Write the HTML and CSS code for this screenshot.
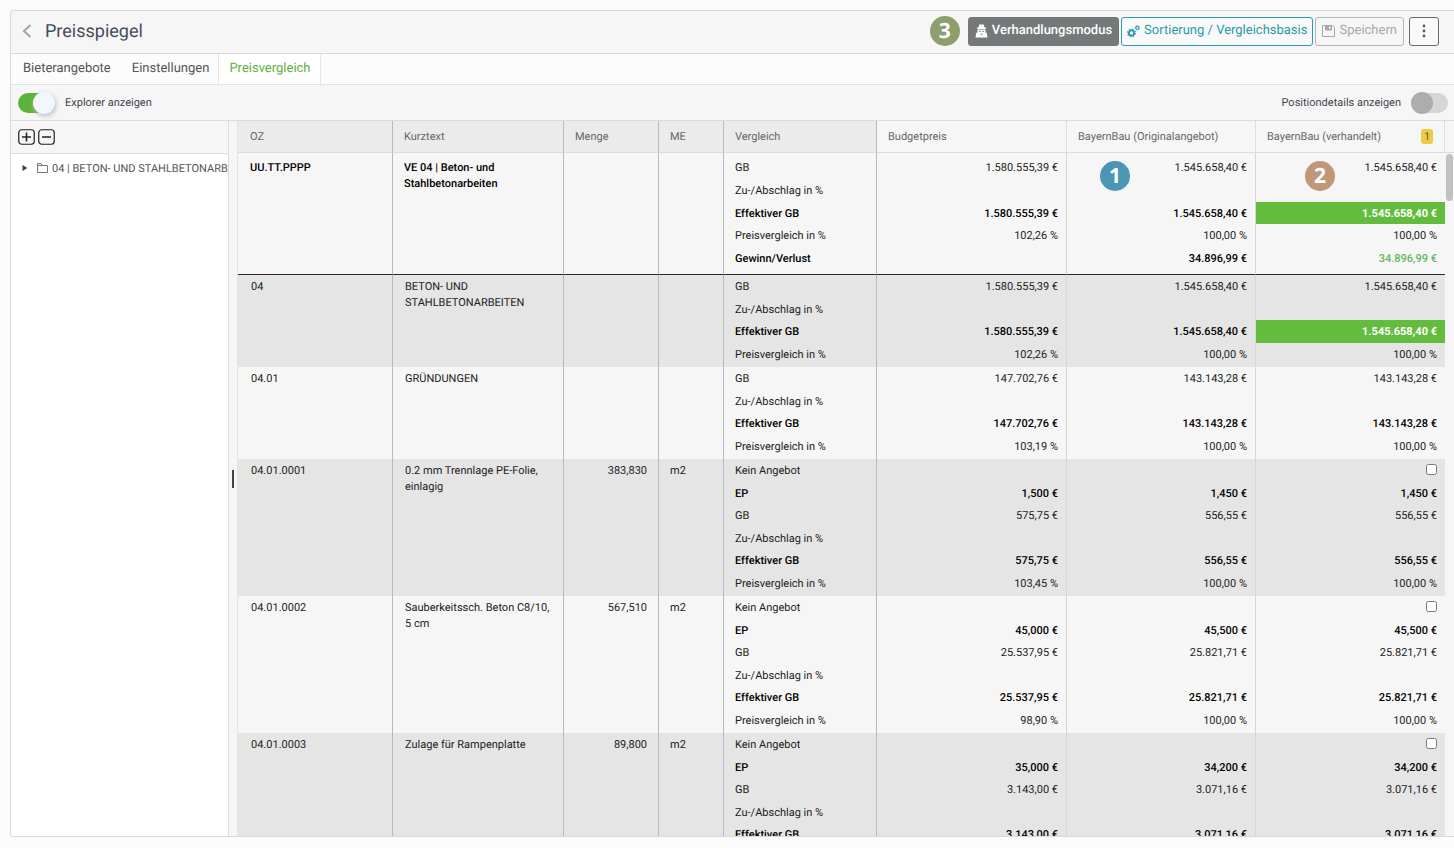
FILE: index.html
```html
<!DOCTYPE html>
<html lang="de">
<head>
<meta charset="utf-8">
<title>Preisspiegel</title>
<link rel="stylesheet" href="styles.css">
</head>
<body>
<main class="panel">
  <header class="titlebar">
    <button class="back" type="button" aria-label="Zurück"><svg width="10" height="16" viewBox="0 0 10 16"><path d="M8.500 2 2 8l6.500 6" fill="none" stroke="#a3a3a3" stroke-width="2"/></svg></button>
    <h1 class="title">Preisspiegel</h1>
    <div class="actions">
      <span class="marker marker-olive">3</span>
      <button class="btn btn-dark" type="button"><svg width="13" height="14" viewBox="0 0 13 14"><path fill="#fff" d="M3.500 3.500 4.200.8 5.300.2 6.500.7 7.700.2 8.800.8 9.500 3.500h1.500V5H2V3.500zM2.500 5.500h8v2.700l1.300.8.700 4.500H.5L1.200 9l1.300-.8z"/><path d="M4 7.300h1.800M7.200 7.300H9M5.500 10.300h2" stroke="#75797a" stroke-width=".9"/></svg>Verhandlungsmodus</button>
      <button class="btn btn-teal" type="button"><svg width="13" height="14" viewBox="0 0 13 14"><circle cx="4.500" cy="9" r="2.600" fill="none" stroke="#2a9ba8" stroke-width="1.800"/><circle cx="4.500" cy="9" r="3.900" fill="none" stroke="#2a9ba8" stroke-width="1.200" stroke-dasharray="1.500 1.560"/><circle cx="10.300" cy="3.800" r="1.500" fill="none" stroke="#2a9ba8" stroke-width="1.100"/><circle cx="10.300" cy="3.800" r="2.300" fill="none" stroke="#2a9ba8" stroke-width=".8" stroke-dasharray="1 .8"/></svg>Sortierung / Vergleichsbasis</button>
      <button class="btn btn-muted" type="button"><svg width="13" height="12" viewBox="0 0 13 12"><path d="M.5.5h10l2 2v9H.5z" fill="none" stroke="#a8a8a8"/><path d="M3 .5h7v5H3z" fill="#a8a8a8"/><path d="M7 1.500h1.500v2.500H7z" fill="#f6f6f6"/></svg>Speichern</button>
      <button class="btn btn-more" type="button" aria-label="Mehr"><svg width="4" height="14" viewBox="0 0 4 14"><g fill="#555a5e"><circle cx="2" cy="2" r="1.400"/><circle cx="2" cy="7" r="1.400"/><circle cx="2" cy="12" r="1.400"/></g></svg></button>
    </div>
  </header>
  <nav class="tabs">
    <a class="tab" href="#bieter">Bieterangebote</a>
    <a class="tab" href="#einstellungen">Einstellungen</a>
    <a class="tab tab-active" href="#preis">Preisvergleich</a>
  </nav>
  <div class="toolbar">
    <label class="toggle"><input class="switch switch-on" type="checkbox" checked>Explorer anzeigen</label>
    <label class="toggle">Positiondetails anzeigen<input class="switch switch-off" type="checkbox"></label>
  </div>
  <div class="content">
    <aside class="explorer">
      <div class="explorer-tools">
        <button class="square" type="button" aria-label="Alle öffnen"><svg width="17" height="16" viewBox="0 0 17 16"><rect x=".75" y=".75" width="15.500" height="14.500" rx="3" fill="none" stroke="#222" stroke-width="1.200"/><path d="M4 8h9M8.500 3.500v9" stroke="#222" stroke-width="1.600"/></svg></button>
        <button class="square" type="button" aria-label="Alle schließen"><svg width="17" height="16" viewBox="0 0 17 16"><rect x=".75" y=".75" width="15.500" height="14.500" rx="3" fill="none" stroke="#222" stroke-width="1.200"/><path d="M4 8h9" stroke="#222" stroke-width="1.600"/></svg></button>
      </div>
      <div class="node">
        <svg class="node-arrow" width="6" height="8" viewBox="0 0 6 8"><path d="M.5 1 5.500 4 .5 7z" fill="#444"/></svg>
        <svg class="node-folder" width="11" height="10" viewBox="0 0 11 10"><path d="M.5 9.500v-9h3.500l1 2h5.500v7zM.5 2.500H5" fill="none" stroke="#777"/></svg>
        <span class="node-label">04 | BETON- UND STAHLBETONARBEITEN</span>
      </div>
    </aside>
    <div class="splitter"><span class="grip"></span></div>
    <div class="grid-area">
      <table class="grid">
        <colgroup><col class="c-oz"><col class="c-text"><col class="c-menge"><col class="c-me"><col class="c-vergleich"><col class="c-budget"><col><col></colgroup>
        <thead>
          <tr><th>OZ</th><th>Kurztext</th><th>Menge</th><th>ME</th><th>Vergleich</th><th class="price">Budgetpreis</th><th class="price">BayernBau (Originalangebot)</th><th class="price"><span class="head-flex">BayernBau (verhandelt)<span class="rank">1</span></span></th></tr>
        </thead>
        <tbody class="total">
          <tr><td rowspan="5" class="text strong">UU.TT.PPPP</td><td rowspan="5" class="text strong">VE 04 | Beton- und Stahlbetonarbeiten</td><td rowspan="5"></td><td rowspan="5"></td><td>GB</td><td class="num">1.580.555,39 €</td><td class="num marked">1.545.658,40 €<span class="marker marker-blue">1</span></td><td class="num marked">1.545.658,40 €<span class="marker marker-tan">2</span></td></tr>
          <tr><td>Zu-/Abschlag in %</td><td class="num"></td><td class="num"></td><td class="num"></td></tr>
          <tr class="strong"><td>Effektiver GB</td><td class="num">1.580.555,39 €</td><td class="num">1.545.658,40 €</td><td class="num best">1.545.658,40 €</td></tr>
          <tr><td>Preisvergleich in %</td><td class="num">102,26 %</td><td class="num">100,00 %</td><td class="num">100,00 %</td></tr>
          <tr class="strong"><td>Gewinn/Verlust</td><td class="num"></td><td class="num">34.896,99 €</td><td class="num gain">34.896,99 €</td></tr>
        </tbody>
        <tbody class="shade">
          <tr><td rowspan="4" class="text">04</td><td rowspan="4" class="text">BETON- UND STAHLBETONARBEITEN</td><td rowspan="4"></td><td rowspan="4"></td><td>GB</td><td class="num">1.580.555,39 €</td><td class="num">1.545.658,40 €</td><td class="num">1.545.658,40 €</td></tr>
          <tr><td>Zu-/Abschlag in %</td><td class="num"></td><td class="num"></td><td class="num"></td></tr>
          <tr class="strong"><td>Effektiver GB</td><td class="num">1.580.555,39 €</td><td class="num">1.545.658,40 €</td><td class="num best">1.545.658,40 €</td></tr>
          <tr><td>Preisvergleich in %</td><td class="num">102,26 %</td><td class="num">100,00 %</td><td class="num">100,00 %</td></tr>
        </tbody>
        <tbody>
          <tr><td rowspan="4" class="text">04.01</td><td rowspan="4" class="text">GRÜNDUNGEN</td><td rowspan="4"></td><td rowspan="4"></td><td>GB</td><td class="num">147.702,76 €</td><td class="num">143.143,28 €</td><td class="num">143.143,28 €</td></tr>
          <tr><td>Zu-/Abschlag in %</td><td class="num"></td><td class="num"></td><td class="num"></td></tr>
          <tr class="strong"><td>Effektiver GB</td><td class="num">147.702,76 €</td><td class="num">143.143,28 €</td><td class="num">143.143,28 €</td></tr>
          <tr><td>Preisvergleich in %</td><td class="num">103,19 %</td><td class="num">100,00 %</td><td class="num">100,00 %</td></tr>
        </tbody>
        <tbody class="shade">
          <tr><td rowspan="6" class="text">04.01.0001</td><td rowspan="6" class="text">0.2 mm Trennlage PE-Folie, einlagig</td><td rowspan="6" class="qty">383,830</td><td rowspan="6">m2</td><td>Kein Angebot</td><td class="num"></td><td class="num"></td><td class="num"><input class="check" type="checkbox" aria-label="Kein Angebot 04.01.0001"></td></tr>
          <tr class="strong"><td>EP</td><td class="num">1,500 €</td><td class="num">1,450 €</td><td class="num">1,450 €</td></tr>
          <tr><td>GB</td><td class="num">575,75 €</td><td class="num">556,55 €</td><td class="num">556,55 €</td></tr>
          <tr><td>Zu-/Abschlag in %</td><td class="num"></td><td class="num"></td><td class="num"></td></tr>
          <tr class="strong"><td>Effektiver GB</td><td class="num">575,75 €</td><td class="num">556,55 €</td><td class="num">556,55 €</td></tr>
          <tr><td>Preisvergleich in %</td><td class="num">103,45 %</td><td class="num">100,00 %</td><td class="num">100,00 %</td></tr>
        </tbody>
        <tbody>
          <tr><td rowspan="6" class="text">04.01.0002</td><td rowspan="6" class="text">Sauberkeitssch. Beton C8/10, 5 cm</td><td rowspan="6" class="qty">567,510</td><td rowspan="6">m2</td><td>Kein Angebot</td><td class="num"></td><td class="num"></td><td class="num"><input class="check" type="checkbox" aria-label="Kein Angebot 04.01.0002"></td></tr>
          <tr class="strong"><td>EP</td><td class="num">45,000 €</td><td class="num">45,500 €</td><td class="num">45,500 €</td></tr>
          <tr><td>GB</td><td class="num">25.537,95 €</td><td class="num">25.821,71 €</td><td class="num">25.821,71 €</td></tr>
          <tr><td>Zu-/Abschlag in %</td><td class="num"></td><td class="num"></td><td class="num"></td></tr>
          <tr class="strong"><td>Effektiver GB</td><td class="num">25.537,95 €</td><td class="num">25.821,71 €</td><td class="num">25.821,71 €</td></tr>
          <tr><td>Preisvergleich in %</td><td class="num">98,90 %</td><td class="num">100,00 %</td><td class="num">100,00 %</td></tr>
        </tbody>
        <tbody class="shade">
          <tr><td rowspan="6" class="text">04.01.0003</td><td rowspan="6" class="text">Zulage für Rampenplatte</td><td rowspan="6" class="qty">89,800</td><td rowspan="6">m2</td><td>Kein Angebot</td><td class="num"></td><td class="num"></td><td class="num"><input class="check" type="checkbox" aria-label="Kein Angebot 04.01.0003"></td></tr>
          <tr class="strong"><td>EP</td><td class="num">35,000 €</td><td class="num">34,200 €</td><td class="num">34,200 €</td></tr>
          <tr><td>GB</td><td class="num">3.143,00 €</td><td class="num">3.071,16 €</td><td class="num">3.071,16 €</td></tr>
          <tr><td>Zu-/Abschlag in %</td><td class="num"></td><td class="num"></td><td class="num"></td></tr>
          <tr class="strong"><td>Effektiver GB</td><td class="num">3.143,00 €</td><td class="num">3.071,16 €</td><td class="num">3.071,16 €</td></tr>
          <tr><td></td><td class="num"></td><td class="num"></td><td class="num"></td></tr>
        </tbody>
      </table>
    </div>
    <div class="scroll-track"><div class="scroll-head"></div><div class="scroll-thumb"></div></div>
  </div>
</main>
</body>
</html>
```

FILE: styles.css
```css
* { box-sizing: border-box; }
body {
  margin: 0;
  height: 100vh;
  padding: 10px 0 11px 10px;
  overflow: hidden;
  background: #fcfcfc;
  color: #1c1c1c;
  font-family: Roboto, "Liberation Sans", sans-serif;
  font-size: 11px;
  text-rendering: geometricPrecision;
}
button { font-family: inherit; text-rendering: inherit; cursor: pointer; }
.panel {
  height: 100%;
  display: flex;
  flex-direction: column;
  border: 1px solid #d9dadb;
  border-right: 0;
  border-radius: 3px 0 0 3px;
  background: #f6f6f6;
  overflow: hidden;
}
.titlebar {
  display: flex;
  align-items: center;
  height: 43px;
  flex: none;
  padding: 0 15px 2px 11px;
  border-bottom: 1px solid #d9dadb;
}
.back { display: flex; padding: 0; border: 0; background: none; }
.title { margin: 0 0 0 13px; font-size: 18px; font-weight: 400; line-height: 24px; padding-top: 2px; color: #454d59; }
.actions { display: flex; align-items: center; gap: 2px; margin-left: auto; }
.marker {
  display: flex;
  align-items: center;
  justify-content: center;
  width: 30px;
  height: 30px;
  border-radius: 50%;
  color: #fff;
  font: 700 21px/30px "Open Sans", sans-serif;
}
.marker-olive { margin-right: 6px; background: #8e9e6c; }
.marker-blue { background: #4a96b4; }
.marker-tan { background: #bf9779; }
.btn {
  display: flex;
  align-items: center;
  justify-content: center;
  gap: 4px;
  height: 29px;
  padding: 0 6px;
  border: 1px solid;
  border-radius: 3px;
  background: #f9f9f9;
  font-size: 13px;
  line-height: 16px;
}
.btn-dark { border-color: #75797a; background: #75797a; color: #fff; font-weight: 500; }
.btn-teal { padding: 0 5px; border-color: #2a9ba8; color: #2a9ba8; }
.btn-muted { border-color: #b5b5b5; color: #a8a8a8; background: #f6f6f6; }
.btn-more { width: 30px; margin-left: 3px; padding: 0; border-color: #666a6e; }
.tabs { display: flex; flex: none; height: 31px; background: #fcfcfc; border-bottom: 1px solid #e2e2e2; }
.tab {
  padding: 0 9px 0 12px;
  font-size: 13px;
  line-height: 30px;
  height: 30px;
  color: #555;
  text-decoration: none;
}
.tab-active { padding: 0 9px 0 10px; border: solid #e6e6e6; border-width: 0 1px; background: #fff; color: #5cb23f; }
.toolbar {
  display: flex;
  align-items: center;
  justify-content: space-between;
  flex: none;
  height: 36px;
  padding: 0 6px 0 7px;
  border-bottom: 1px solid #dcdcdc;
  color: #3f4650;
}
.toggle { display: flex; align-items: center; gap: 10px; }
.switch { appearance: none; position: relative; width: 37px; height: 20px; margin: 0; border-radius: 10px; background: #d6d6d6; }
.switch::before { content: ""; position: absolute; top: -1px; width: 22px; height: 22px; border-radius: 50%; }
.switch-on { background: #5bb43a; }
.switch-on::before { right: 0; background: #f2f7fd; box-shadow: 1px 2px 5px #bbbbbb; }
.switch-off::before { left: 0; background: #adadad; }
.content { display: flex; flex: 1; min-height: 0; }
.explorer { width: 218px; flex: none; overflow: hidden; background: #fff; border-right: 1px solid #dcdcdc; }
.explorer-tools { display: flex; align-items: center; gap: 3px; height: 33px; padding-left: 7px; background: #f6f6f6; border-bottom: 1px solid #dcdcdc; }
.square { display: flex; padding: 0; border: 0; background: none; }
.node { display: flex; align-items: center; height: 28px; padding-left: 11px; white-space: nowrap; color: #555; }
.node-arrow { flex: none; margin-right: 9px; }
.node-folder { flex: none; margin-right: 4px; }
.node-label { min-width: 0; overflow: hidden; }
.splitter { display: flex; align-items: center; justify-content: center; width: 9px; flex: none; border-right: 1px solid #e4e4e4; }
.grip { width: 2px; height: 18px; background: #444; }
.grid-area { flex: 1; min-width: 0; overflow: hidden; }
.grid { width: 100%; table-layout: fixed; border-collapse: separate; border-spacing: 0; }
.c-oz { width: 155px; }
.c-text { width: 171px; }
.c-menge { width: 95px; }
.c-me { width: 65px; }
.c-vergleich { width: 153px; }
.c-budget { width: 190px; }
.grid th {
  height: 32px;
  padding: 0 11px;
  border-right: 1px solid #b9b9b9;
  border-bottom: 1px solid #dcdcdc;
  background: #ebebeb;
  color: #666;
  font-weight: 400;
  line-height: 16px;
  text-align: left;
}
.grid th:first-child { padding-left: 12px; }
.grid th.price { background: #f6f6f6; border-right-color: #dedede; }
.head-flex { display: flex; justify-content: space-between; }
.rank { width: 12px; height: 15px; border-radius: 3px; background: #edcb45; color: #6d5a14; line-height: 15px; text-align: center; }
.grid td { height: 23px; padding: 2px 11px 0; border-right: 1px solid #b9b9b9; line-height: 20px; vertical-align: top; }
.grid tr:nth-child(even) td:not([rowspan]) { height: 22px; }
.grid tr:last-child td:not([rowspan]) { height: 24px; }
.grid td.num { padding: 2px 8px 0; border-right-color: #d6d6d6; text-align: right; }
.grid td.num:last-child { border-right: 0; }
.grid td.text { padding: 4px 12px 0; line-height: 16px; }
.grid td.text:first-child { padding-left: 13px; }
.grid td.qty { text-align: right; }
.shade { background: #e5e5e5; }
.strong { font-weight: 500; color: #000; }
.grid .total tr:first-child td { height: 26px; padding-top: 5px; }
.grid .total tr:first-child td.text { padding: 7px 11px 0; }
.grid .total tr:first-child td.text:first-child { padding-left: 12px; }
.grid .total tr:nth-child(2) td { height: 23px; }
.grid .total tr:nth-child(3) td { height: 22px; }
.grid .total tr:nth-child(4) td { height: 23px; }
.grid .total tr:last-child td { height: 28px; }
.total tr:first-child td[rowspan], .total tr:last-child td { border-bottom: 1px solid #2c2629; }
.grid td.best { background: #64bc3e; color: #fff; font-weight: 700; }
.grid td.gain { color: #5cb85c; }
.marked { position: relative; }
.marked .marker { position: absolute; top: 8px; left: 33px; }
.marked .marker-tan { left: 49px; }
.check { width: 11px; height: 11px; margin: 3px 0 0; vertical-align: top; }
.scroll-track { width: 9px; flex: none; }
.scroll-head { height: 32px; border-bottom: 1px solid #dcdcdc; }
.scroll-thumb { width: 7px; height: 47px; margin: 1px; border-radius: 4px; background: #c1c1c1; }
```
